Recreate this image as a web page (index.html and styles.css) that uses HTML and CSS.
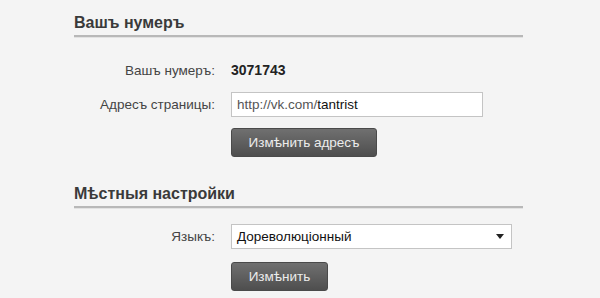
FILE: index.html
```html
<!DOCTYPE html>
<html lang="ru">
<head>
<meta charset="utf-8">
<link rel="stylesheet" href="styles.css">
</head>
<body>
<div class="page">
  <section class="block">
    <h2 class="title">Вашъ нумеръ</h2>
    <div class="row row-first">
      <div class="label">Вашъ нумеръ:</div>
      <div class="value">3071743</div>
    </div>
    <div class="row row-addr">
      <div class="label">Адресъ страницы:</div>
      <div class="field input"><span class="muted">http://vk.com/</span>tantrist</div>
    </div>
    <div class="row row-btn">
      <div class="label"></div>
      <div><button class="btn btn-wide">Измѣнить адресъ</button></div>
    </div>
  </section>
  <section class="block block-second">
    <h2 class="title">Мѣстныя настройки</h2>
    <div class="row row-lang">
      <div class="label">Языкъ:</div>
      <div class="field select"><span>Дореволюцiонный</span><span class="arrow"></span></div>
    </div>
    <div class="row row-btn2">
      <div class="label"></div>
      <div><button class="btn btn-narrow">Измѣнить</button></div>
    </div>
  </section>
</div>
</body>
</html>
```
FILE: styles.css
```css
html, body {
  margin: 0;
  padding: 0;
  background: #f4f4f4;
}
body {
  font-family: "Liberation Sans", Arial, sans-serif;
  font-size: 13.5px;
  color: #333;
}
.page {
  width: 449px;
  margin-left: 74px;
  padding-top: 13px;
}
.title {
  margin: 0;
  font-size: 16px;
  font-weight: bold;
  color: #3a3a3a;
  line-height: 19px;
  padding-bottom: 3px;
  border-bottom: 2px solid #b8b8b8;
  box-shadow: 0 1px 0 #e2e2e2;
}
.row {
  display: grid;
  grid-template-columns: 141px auto;
  column-gap: 16px;
  align-items: center;
}
.label {
  text-align: right;
  color: #444;
}
.row-first { margin-top: 21px; height: 24px; }
.value {
  font-weight: bold;
  font-size: 14px;
  color: #222;
}
.field {
  box-sizing: border-box;
  height: 25px;
  background: #fff;
  border: 1px solid #c4c4c4;
  display: flex;
  align-items: center;
  padding: 0 5px;
  color: #111;
}
.input { width: 252px; }
.row-addr { margin-top: 10px; }
.muted { color: #555; }
.row-btn { margin-top: 11px; }
.btn {
  box-sizing: border-box;
  height: 29px;
  border: 1px solid #4a4a4a;
  border-radius: 3px;
  background: linear-gradient(#707070, #4e4e4e);
  color: #ececec;
  font-family: "Liberation Sans", Arial, sans-serif;
  font-size: 13.5px;
  padding: 0;
  display: block;
}
.btn-wide { width: 146px; }
.btn-narrow { width: 97px; }
.block-second { margin-top: 27px; }
.row-lang { margin-top: 16px; }
.select {
  width: 281px;
  justify-content: space-between;
  padding-right: 7px;
}
.arrow {
  width: 0;
  height: 0;
  border-left: 4px solid transparent;
  border-right: 4px solid transparent;
  border-top: 5px solid #222;
}
.row-btn2 { margin-top: 13px; }
```
